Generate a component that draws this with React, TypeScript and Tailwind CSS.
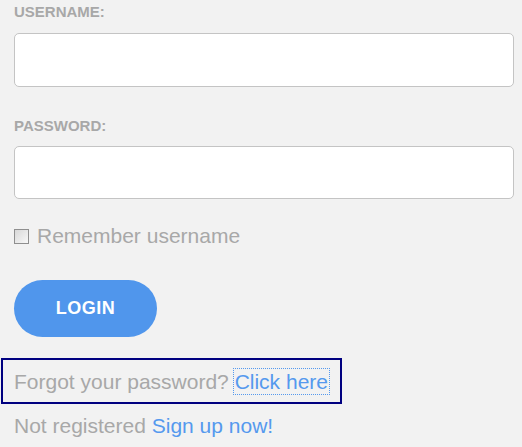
export default function App() {
    return (
        <div className="min-h-screen w-full bg-[#f2f2f2] font-['Liberation_Sans',Arial,sans-serif]">
            <div className="pt-[3px]">
                <div className="px-[14px]">
                    <label className="block text-[15px] leading-[18px] font-bold text-[#a8a8a8]">USERNAME:</label>
                    <input
                        type="text"
                        className="mt-[12px] block h-[54px] w-[500px] rounded-[5px] border border-[#c4c4c4] bg-white"
                    />
                    <label className="mt-[30px] block text-[15px] leading-[18px] font-bold text-[#a8a8a8]">PASSWORD:</label>
                    <input
                        type="password"
                        className="mt-[11px] block h-[53px] w-[500px] rounded-[5px] border border-[#c4c4c4] bg-white"
                    />
                    <div className="mt-[25px] flex items-center gap-[8px]">
                        <span className="h-[15px] w-[15px] border border-[#8f8f8f] bg-gradient-to-br from-[#d8d8d8] to-[#f8f8f8]"></span>
                        <span className="text-[21px] leading-[24px] text-[#a8a8a8]">Remember username</span>
                    </div>
                    <button className="mt-[32px] h-[57px] w-[143px] rounded-full bg-[#5096ec] text-[18px] font-bold tracking-[0.5px] text-white">
                        LOGIN
                    </button>
                </div>
                <div className="mt-[21px] ml-[1px] w-[341px] border-2 border-[#000080] pl-[11px] pt-[10px] pb-[8px]">
                    <p className="text-[21px] leading-[24px] text-[#a8a8a8]">
                        Forgot your password?{" "}
                        <a className="outline-1 outline-dotted outline-offset-1 outline-[#5599ee] text-[#5599ee]">Click here</a>
                    </p>
                </div>
                <p className="mt-[10px] px-[14px] text-[21px] leading-[24px] text-[#a8a8a8]">
                    Not registered <a className="text-[#5599ee]">Sign up now!</a>
                </p>
            </div>
        </div>
    );
}
